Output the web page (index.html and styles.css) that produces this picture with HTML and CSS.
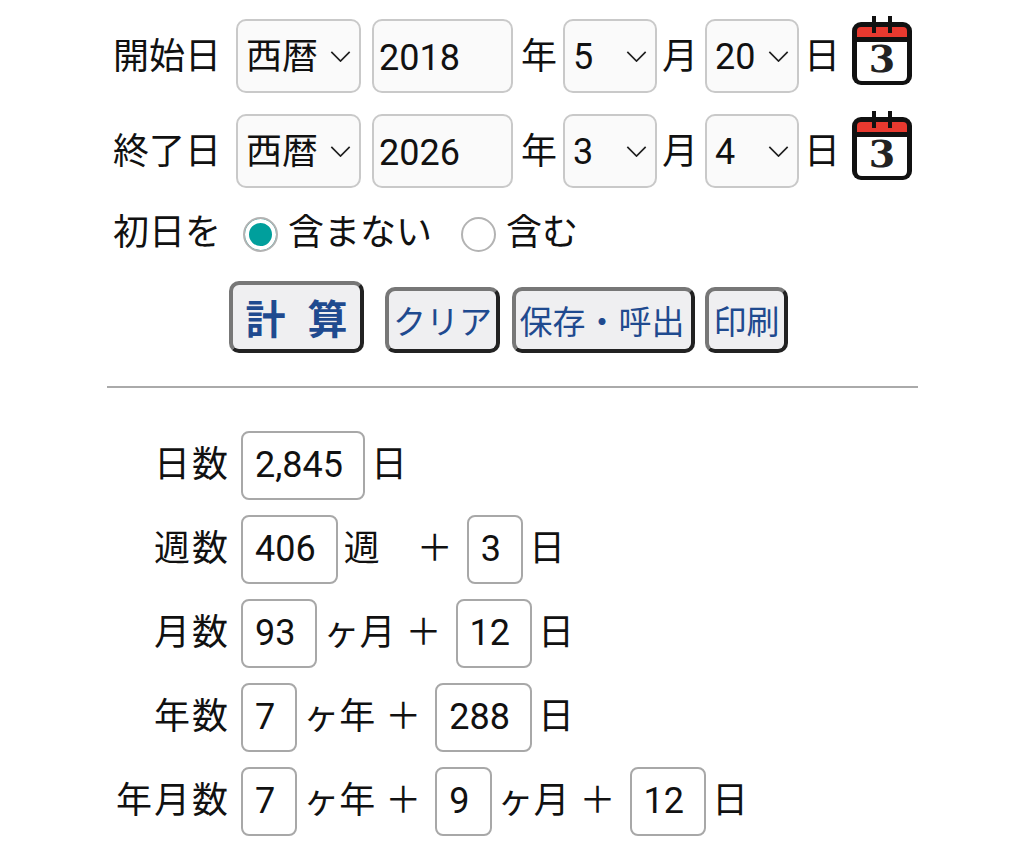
FILE: index.html
```html
<!DOCTYPE html>
<html lang="ja">

<head>
    <meta charset="UTF-8">
    <meta name="viewport" content="width=device-width, initial-scale=1.0">
    <title>日数計算</title>
    <link rel="stylesheet" href="styles.css">
</head>

<body>
    <div class="box">
        <div class="date_row">
            <span class="date_label">開始日</span>
            <select class="era"><option>西暦</option></select>
            <input class="year" value="2018">
            <span class="year_unit">年</span>
            <select class="num"><option>5</option></select>
            <span class="month_unit">月</span>
            <select class="num"><option>20</option></select>
            <span class="day_unit">日</span>
            <svg class="calendar" viewBox="0 0 60 70">
                <rect x="0" y="6" width="60" height="63" rx="9" fill="#111" />
                <path d="M5 21V15q0-4 4-4h42q4 0 4 4v6z" fill="#e8392f" />
                <path d="M5 26h50v34q0 5-5 5H10q-5 0-5-5z" fill="#fff" />
                <path d="M22 0v17M38 0v17" stroke="#111" stroke-width="4" />
                <text x="30" y="56" text-anchor="middle" class="calendar_num">3</text>
            </svg>
        </div>
        <div class="date_row">
            <span class="date_label">終了日</span>
            <select class="era"><option>西暦</option></select>
            <input class="year" value="2026">
            <span class="year_unit">年</span>
            <select class="num"><option>3</option></select>
            <span class="month_unit">月</span>
            <select class="num"><option>4</option></select>
            <span class="day_unit">日</span>
            <svg class="calendar" viewBox="0 0 60 70">
                <rect x="0" y="6" width="60" height="63" rx="9" fill="#111" />
                <path d="M5 21V15q0-4 4-4h42q4 0 4 4v6z" fill="#e8392f" />
                <path d="M5 26h50v34q0 5-5 5H10q-5 0-5-5z" fill="#fff" />
                <path d="M22 0v17M38 0v17" stroke="#111" stroke-width="4" />
                <text x="30" y="56" text-anchor="middle" class="calendar_num">3</text>
            </svg>
        </div>
        <div class="first_row">
            <span class="date_label">初日を</span>
            <label class="choice"><input type="radio" name="first" checked>含まない</label>
            <label class="choice"><input type="radio" name="first">含む</label>
        </div>
        <div class="func_btn">
            <button class="calc">計 算</button>
            <button class="clear">クリア</button>
            <button class="save">保存・呼出</button>
            <button class="print">印刷</button>
        </div>
        <hr class="line">
        <div class="result_row">
            <span class="result_label">日数</span>
            <span class="value">2,845</span>
            <span>日</span>
        </div>
        <div class="result_row">
            <span class="result_label">週数</span>
            <span class="value">406</span>
            <span class="week">週</span>
            <span class="plus">＋</span>
            <span class="value">3</span>
            <span>日</span>
        </div>
        <div class="result_row">
            <span class="result_label">月数</span>
            <span class="value">93</span>
            <span>ヶ月</span>
            <span class="plus">＋</span>
            <span class="value">12</span>
            <span>日</span>
        </div>
        <div class="result_row">
            <span class="result_label">年数</span>
            <span class="value">7</span>
            <span>ヶ年</span>
            <span class="plus">＋</span>
            <span class="value">288</span>
            <span>日</span>
        </div>
        <div class="result_row">
            <span class="result_label">年月数</span>
            <span class="value">7</span>
            <span>ヶ年</span>
            <span class="plus">＋</span>
            <span class="value">9</span>
            <span>ヶ月</span>
            <span class="plus">＋</span>
            <span class="value">12</span>
            <span>日</span>
        </div>
    </div>
</body>

</html>
```

FILE: styles.css
```css
* {
    margin: 0;
    padding: 0;
    box-sizing: border-box;
}

body {
    background-color: #fff;
    color: #111;
    font-family: Roboto, "Noto Sans CJK JP", sans-serif;
    font-size: 36px;
    line-height: 1.2;
}

.box {
    width: 811px;
    margin-left: 107px;
    padding-top: 19px;
}

.date_row {
    display: flex;
    align-items: center;
    height: 74px;
    margin-bottom: 21px;
    padding-left: 6px;
}

.date_row span {
    padding-top: 3px;
}

.date_label {
    width: 108px;
}

select,
.year {
    height: 74px;
    padding-top: 3px;
    font: inherit;
    color: inherit;
    background-color: #fafafa;
    border: 2px solid #c9c9c9;
    border-radius: 10px;
    outline: none;
}

select {
    appearance: none;
    padding-left: 8px;
    background-image: url("data:image/svg+xml,%3Csvg xmlns='http://www.w3.org/2000/svg' viewBox='0 0 22 12'%3E%3Cpath d='M1 1l10 10L21 1' fill='none' stroke='%23222' stroke-width='1.8'/%3E%3C/svg%3E");
    background-repeat: no-repeat;
    background-size: 21px 11px;
    background-position: right 8px center;
}

.era {
    width: 125px;
    margin-left: 15px;
}

.year {
    width: 141px;
    margin-left: 11px;
    padding-left: 5px;
}

.num {
    width: 94px;
}

.year_unit {
    margin: 0 6px 0 8px;
}

.month_unit {
    margin: 0 7px 0 5px;
}

.day_unit {
    margin: 0 12px 0 5px;
}

.calendar {
    width: 60px;
    height: 70px;
    margin-bottom: 10px;
}

.calendar_num {
    font-family: "DejaVu Serif", serif;
    font-size: 38px;
    font-weight: bold;
    fill: #222;
}

.first_row {
    display: flex;
    align-items: center;
    height: 40px;
    margin-top: 26px;
    padding-left: 6px;
}

.choice {
    display: flex;
    align-items: center;
}

.choice input {
    appearance: none;
    width: 35px;
    height: 35px;
    margin: 0 10px 0 22px;
    border: 2px solid #b3b3b3;
    border-radius: 50%;
    background-color: #fff;
}

.choice input:checked {
    background-color: #009f9c;
    box-shadow: inset 0 0 0 4px #fff;
}

.choice + .choice {
    margin-left: 7px;
}

.func_btn {
    display: flex;
    align-items: flex-end;
    margin-top: 27px;
    padding-left: 122px;
}

button {
    height: 66px;
    font-family: inherit;
    font-size: 33px;
    color: #1f4a8f;
    background-color: #efeff1;
    border: 4px solid;
    border-color: #777 #222 #222 #777;
    border-radius: 10px;
}

.calc {
    width: 135px;
    height: 72px;
    font-size: 40px;
    font-weight: bold;
    word-spacing: 12px;
    margin-right: 21px;
}

.clear {
    width: 115px;
    margin-right: 12px;
}

.save {
    width: 183px;
    padding-right: 3px;
    margin-right: 10px;
}

.print {
    width: 83px;
}

.line {
    height: 2px;
    margin: 33px 0 43px;
    background-color: #aaa;
    border: none;
}

.result_row {
    display: flex;
    align-items: center;
    gap: 6px;
    height: 69px;
    margin-bottom: 15px;
}

.result_label {
    width: 123px;
    margin-right: 5px;
    text-align: right;
    letter-spacing: 2px;
}

.value {
    display: flex;
    align-items: center;
    height: 69px;
    padding: 0 20px 0 12px;
    background-color: #fff;
    border: 2px solid #a8a8a8;
    border-radius: 8px;
}

.week {
    width: 63px;
}

.plus {
    margin: 0 8px 0 4px;
}
```
